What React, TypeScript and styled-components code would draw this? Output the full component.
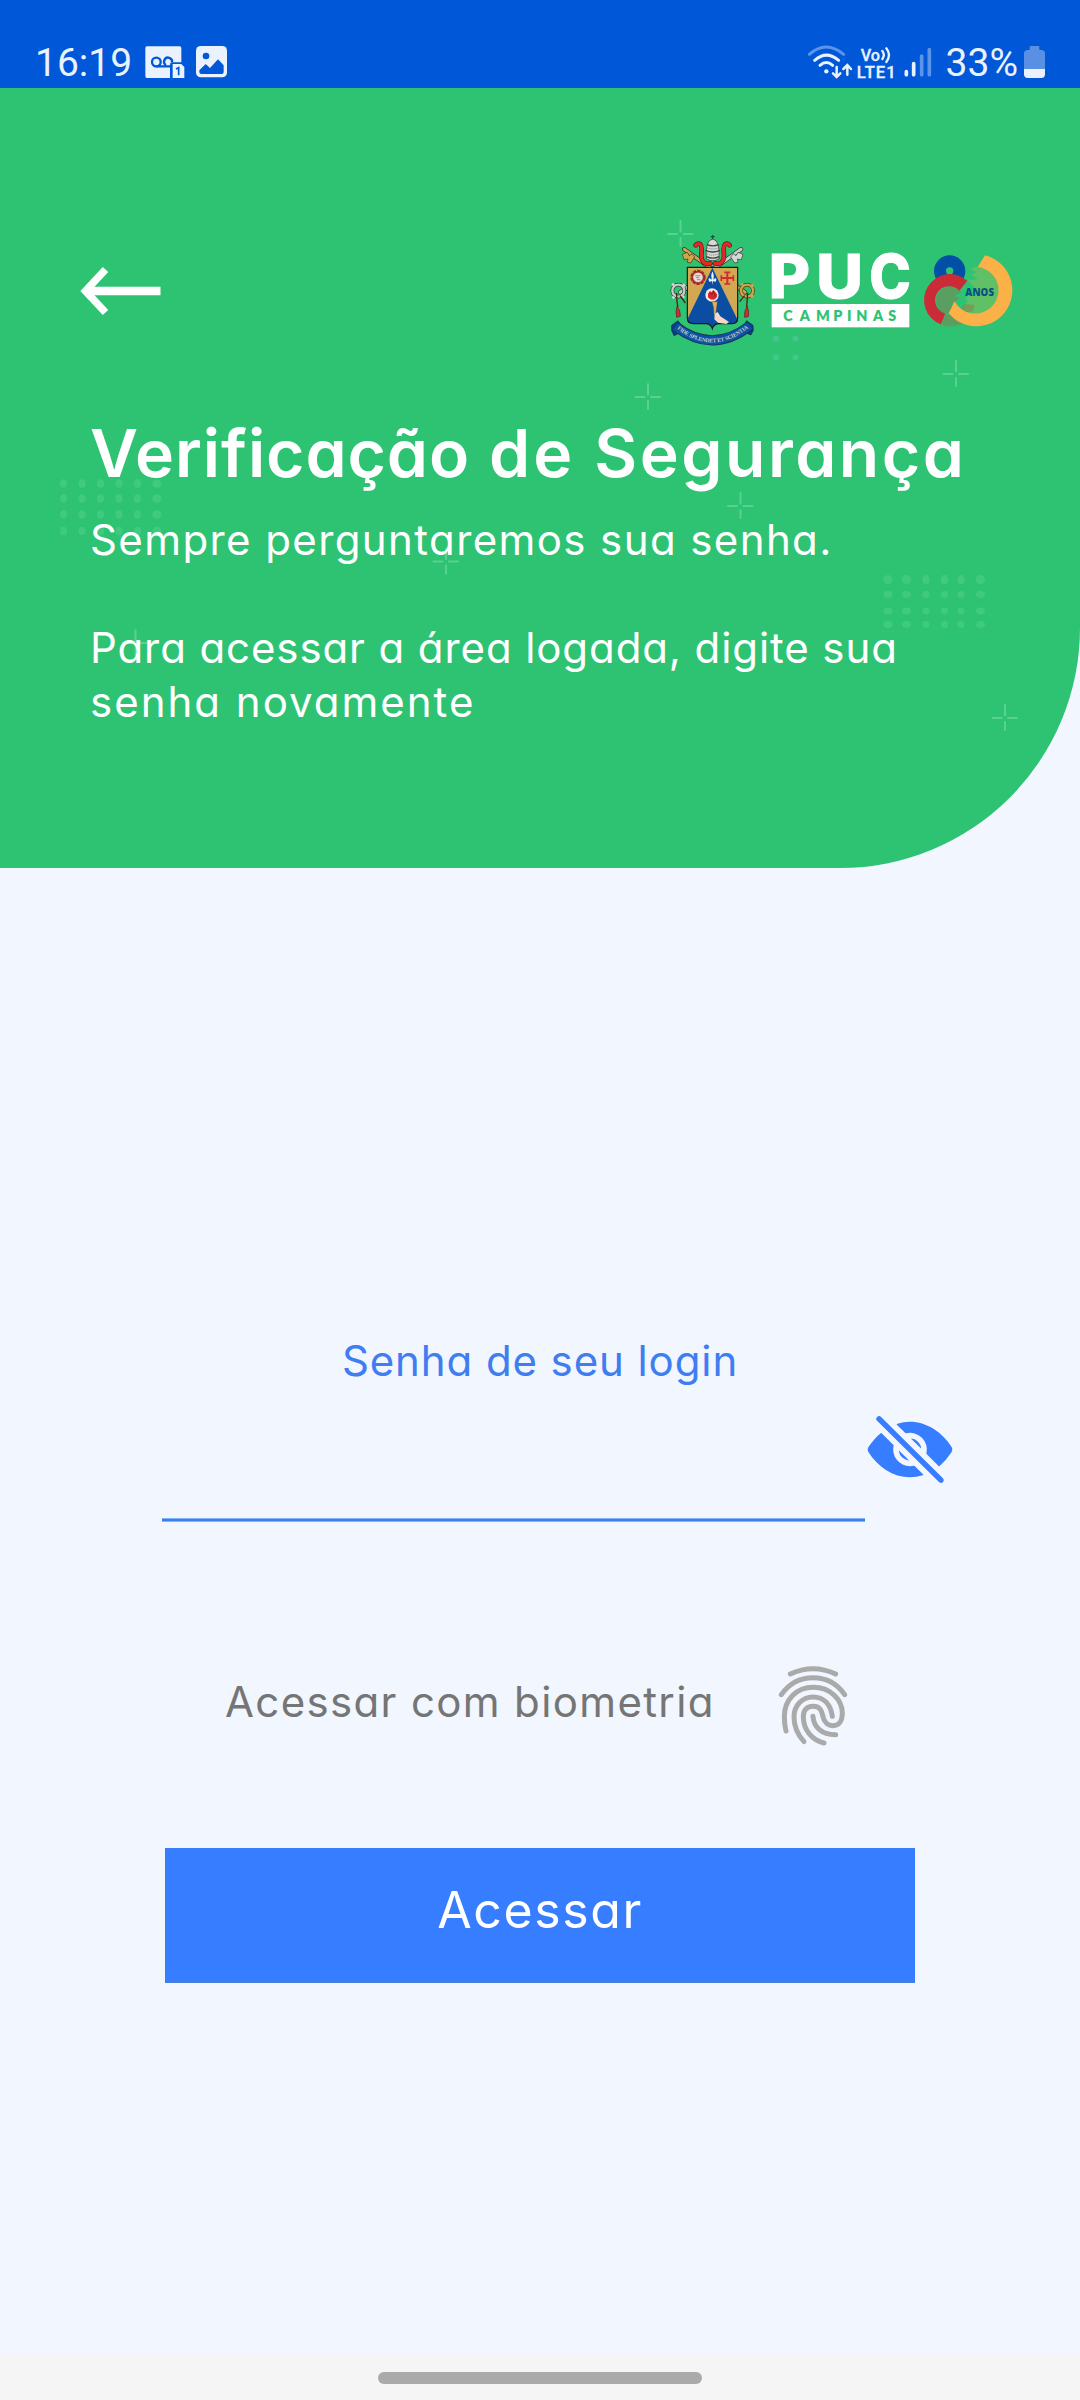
import React from "react";
import styled, { createGlobalStyle } from "styled-components";
import { IoEyeOff } from "react-icons/io5";

const GREEN = "#2ec373";
const BLUE = "#377dff";
const ICE = "#e9f2fe";

const GlobalStyle = createGlobalStyle`
  *, *::before, *::after { box-sizing: border-box; }
  body { margin: 0; background: #f1f6ff; }
  svg { display: block; flex: none; overflow: visible; }
`;

const Screen = styled.div`
  width: 1080px;
  height: 2400px;
  display: flex;
  flex-direction: column;
  background: #f1f6ff;
  font-family: Inter, "Open Sans", sans-serif;
  font-feature-settings: "cv11" 1;
  overflow: hidden;
`;

const StatusBar = styled.div`
  height: 88px;
  flex: none;
  display: flex;
  justify-content: space-between;
  align-items: flex-start;
  padding: 40px 35px 0 35px;
  background: #0057d8;
  color: ${ICE};
  font-family: Roboto, sans-serif;
`;

const StatusGroup = styled.div<{ $gap: number }>`
  display: flex;
  align-items: center;
  height: 44px;
  gap: ${(p) => p.$gap}px;
`;

const StatusText = styled.span<{ $before?: number }>`
  margin-left: ${(p) => p.$before ?? 0}px;
  padding-top: 1px;
  font-size: 39px;
  line-height: 44px;
`;

const Header = styled.header`
  position: relative;
  height: 780px;
  flex: none;
  display: flex;
  flex-direction: column;
  padding: 145px 0 0;
  background: ${GREEN};
  border-bottom-right-radius: 240px;
  color: #fff;
`;

const Decoration = styled.svg`
  position: absolute;
  inset: 0;
`;

const TopRow = styled.div`
  position: relative;
  display: flex;
  align-items: center;
  justify-content: space-between;
  height: 116px;
  padding: 0 66px 0 80px;
`;

const BackButton = styled.button`
  padding: 0;
  border: 0;
  background: none;
`;

const Logo = styled.div`
  display: flex;
  align-items: center;
`;

const HeaderText = styled.div`
  position: relative;
  padding: 59px 0 0 90px;
`;

const Title = styled.h1`
  display: flex;
  gap: 19px;
  margin: 0 0 15px;
  font-size: 66px;
  line-height: 90px;
  font-weight: 600;
  white-space: nowrap;
`;

const TitleWord = styled.span<{ $spacing: number }>`
  letter-spacing: ${(p) => p.$spacing}px;
`;

const Paragraph = styled.p`
  margin: 0 0 54px;
  font-size: 42px;
  line-height: 54px;
`;

const Line = styled.span<{ $spacing: number }>`
  display: block;
  letter-spacing: ${(p) => p.$spacing}px;
`;

const Form = styled.main`
  flex: 1;
  display: flex;
  flex-direction: column;
  padding: 466px 165px 0 162px;
`;

const Label = styled.label`
  align-self: center;
  padding-left: 3px;
  font-size: 42px;
  line-height: 54px;
  letter-spacing: 0.9px;
  color: #3f7df0;
`;

const PasswordRow = styled.div`
  display: flex;
  height: 134px;
  margin-right: -60px;
`;

const PasswordField = styled.div`
  width: 703px;
  height: 134px;
  background: linear-gradient(#82b2fb 0 1px, #407ee9 1px 3px, #82b2fb 3px 4px) bottom / 100% 4px no-repeat;
`;

const EyeToggle = styled.button`
  align-self: flex-start;
  margin: 17px 0 0;
  padding: 0;
  border: 0;
  background: none;
  color: ${BLUE};
  svg { width: 90px; height: 89px; }
`;

const BiometricRow = styled.div`
  display: flex;
  align-items: center;
  justify-content: space-between;
  height: 80px;
  margin-top: 143px;
  padding: 0 67px 0 63px;
  color: #757575;
  font-size: 42px;
  line-height: 54px;
`;

const BiometricLabel = styled.span`
  letter-spacing: 1.35px;
  padding-bottom: 6px;
`;

const SubmitButton = styled.button`
  width: 750px;
  height: 135px;
  margin: 103px 0 0 3px;
  padding: 0 0 10px;
  border: 0;
  border-bottom: 1px solid #4a7fd8;
  background: ${BLUE};
  color: #fff;
  font-family: inherit;
  font-feature-settings: inherit;
  font-size: 50px;
  letter-spacing: 1.6px;
`;

const NavigationBar = styled.div`
  height: 46px;
  flex: none;
  display: flex;
  justify-content: center;
  padding-top: 18px;
  background: #f5f5f5;
`;

const HomePill = styled.div`
  width: 324px;
  height: 12px;
  border-radius: 6px;
  background: #aaa;
`;

const crosses = [
  { x: 680.5, y: 146 },
  { x: 648, y: 309 },
  { x: 956, y: 286 },
  { x: 740.5, y: 418 },
  { x: 1005, y: 630 },
  { x: 446, y: 473.5 },
  { x: 135.5, y: 555 },
];

const dotGrids = [
  { xs: [63.5, 82, 100.5, 119, 137.5, 157], ys: [395.5, 410.5, 426.5, 443] },
  { xs: [888, 906.5, 926, 944.5, 961, 980.5], ys: [491.5, 506.5, 523, 536.5] },
];

function HeaderDecoration() {
  return (
    <Decoration width="1080" height="779" viewBox="0 0 1080 779">
      {crosses.map((c) => (
        <path
          key={`${c.x}-${c.y}`}
          d={`M${c.x - 12.5} ${c.y}h9M${c.x + 3} ${c.y}h9M${c.x} ${c.y - 13}v10.5M${c.x} ${c.y + 4}v8`}
          stroke="#5ad092"
          strokeWidth="2"
          strokeLinecap="round"
          fill="none"
        />
      ))}
      {dotGrids.map((grid, g) =>
        grid.ys.map((y) =>
          grid.xs.map((x, i) => (
            <ellipse
              key={`${g}-${x}-${y}`}
              cx={x}
              cy={y}
              rx={i === 5 || (g === 1 && i < 2) ? 4.5 : 3.5}
              ry={g === 0 ? 4.3 : y < 500 ? 4.6 : 3.4}
              fill="#40ca80"
            />
          ))
        )
      )}
      {[776, 795.5].map((x) =>
        [250.5, 269.5].map((y) => <circle key={`${x}-${y}`} cx={x} cy={y} r="3" fill="#42c88c" />)
      )}
    </Decoration>
  );
}

function BackArrow() {
  return (
    <svg width="82" height="52" viewBox="0 0 82 52" fill="none" stroke="#fff">
      <path d="M7 26H80.5" strokeWidth="8.5" />
      <path d="M25.5 4.5L5.5 26L25.5 47.5" strokeWidth="7.5" />
    </svg>
  );
}

function Crest() {
  return (
    <svg width="90" height="116" viewBox="45 70 270 348">
      <defs>
        <clipPath id="shield">
          <path d="M112 172H263V325Q263 342 246 342H205Q191 344 187 357Q183 344 170 342H130Q112 342 112 325Z" />
        </clipPath>
        <path id="motto" d="M75 352Q187 446 301 350" />
      </defs>
      {/* crossed keys */}
      <g strokeLinecap="round" fill="none">
        <path d="M103 119L285 248" stroke="#2b2a22" strokeWidth="13" />
        <path d="M103 119L285 248" stroke="#d0a54b" strokeWidth="9" />
        <path d="M273 119L91 248" stroke="#333" strokeWidth="13" />
        <path d="M273 119L91 248" stroke="#c7ccca" strokeWidth="9" />
      </g>
      <path d="M97 134L112 128L118 138L126 132L134 142L122 160L112 158L114 148L102 150Z" fill="#d0a54b" stroke="#3c3418" strokeWidth="2" />
      <path d="M279 134L264 128L258 138L250 132L242 142L254 160L264 158L262 148L274 150Z" fill="#d4d8d6" stroke="#333" strokeWidth="2" />
      {/* tiara ribbons */}
      <g fill="none" strokeLinecap="round">
        <path d="M137 107Q142 99 151 104C162 115 148 138 157 152Q165 166 181 161M239 107Q234 99 225 104C214 115 228 138 219 152Q211 166 195 161" stroke="#5c1714" strokeWidth="14" />
        <path d="M137 107Q142 99 151 104C162 115 148 138 157 152Q165 166 181 161M239 107Q234 99 225 104C214 115 228 138 219 152Q211 166 195 161" stroke="#e3282c" strokeWidth="10" />
      </g>
      {/* tiara */}
      <path d="M169 148Q165 91 188 88Q211 91 207 148Q188 158 169 148Z" fill="#d5d9d6" stroke="#222" strokeWidth="2" />
      <path d="M169 141Q188 150 208 141M167 122Q188 132 209 122M171 105Q188 112 206 105" stroke="#3d4240" strokeWidth="4" fill="none" />
      <path d="M171 132Q188 141 206 132M170 114Q188 122 207 114" stroke="#777e7b" strokeWidth="3" strokeDasharray="3 3" fill="none" />
      <path d="M188 76V89M182 81H194" stroke="#174f38" strokeWidth="3.5" />
      {/* key bows and tassels */}
      <g fill="none">
        <circle cx="85" cy="243" r="18" stroke="#35352f" strokeWidth="11" />
        <circle cx="85" cy="243" r="18" stroke="#c7ccca" strokeWidth="7" />
        <path d="M67 227L72 222M98 224L105 230M67 261L73 266M98 263L103 260" stroke="#d8dbd9" strokeWidth="7" />
        <circle cx="291" cy="243" r="18" stroke="#4a3b18" strokeWidth="11" />
        <circle cx="291" cy="243" r="18" stroke="#d0a54b" strokeWidth="7" />
        <path d="M304 224L310 230M274 226L279 221M303 263L310 257M276 263L280 267" stroke="#d0a54b" strokeWidth="7" />
        <path d="M80 250Q80 280 84 292M90 258L106 280M293 250Q291 280 290 292M284 258L269 276" stroke="#4a2419" strokeWidth="4" />
      </g>
      <path d="M81 290Q92 302 91 320L80 323Q76 306 81 290ZM292 290Q298 306 295 321L284 323Q281 305 292 290Z" fill="#dc2830" stroke="#5b1a19" strokeWidth="2" />
      {/* shield */}
      <g clipPath="url(#shield)">
        <rect x="110" y="170" width="156" height="190" fill="#d3a852" />
        <path d="M187 174L264 333V360H110V333Z" fill="#0b4da2" />
      </g>
      <path d="M112 173H263V325Q263 342 246 342H205Q191 344 187 357Q183 344 170 342H130Q112 342 112 325Z" fill="none" stroke="#141b18" strokeWidth="3.5" />
      <circle cx="144" cy="203" r="20" fill="#cf2f2e" stroke="#a52723" strokeWidth="6" strokeDasharray="10 3" />
      <circle cx="144" cy="203" r="15.5" fill="#e6dcd2" stroke="#712" strokeWidth="1.5" />
      <path d="M136 198H151M138 204H148M141 210H151" stroke="#756963" strokeWidth="2" />
      <path d="M232 188V223M215 205H249" stroke="#d7282d" strokeWidth="6" />
      <path d="M223 188H241M223 223H241M214 197V214M250 197V214" stroke="#d7282d" strokeWidth="5" />
      <path d="M187 185Q181 197 185 210L178 205Q173 210 179 217L186 214L187 226L189 214L196 217Q202 210 196 205L190 210Q194 197 187 185Z" fill="#eef2f6" />
      <circle cx="186" cy="256" r="20" fill="#f4e7e0" />
      <path d="M174 252L180 244L185 248L190 241L196 247L202 255L199 265L191 270L181 269L174 263Z" fill="#d8262d" />
      <path d="M178 250L186 254L190 244L194 256L199 262" stroke="#8c1420" strokeWidth="2" fill="none" />
      <path d="M186 276H202L197 314H192L191 294Z" fill="#dcb05c" stroke="#725c2c" strokeWidth="1" />
      <path d="M194 312L203 307L211 320L237 337L229 343L204 339L193 329Z" fill="#f7d8c8" />
      {/* motto ribbon */}
      <path d="M65 347L84 333L95 348L90 369L72 378L65 363ZM309 347L290 333L280 349L286 369L303 376L310 362Z" fill="#0b3f89" stroke="#102a44" strokeWidth="2" />
      <path d="M76 350Q187 435 300 348" fill="none" stroke="#132d46" strokeWidth="30" />
      <path d="M76 350Q187 435 300 348" fill="none" stroke="#0d51a5" strokeWidth="26" />
      <text fontFamily="Liberation Serif, serif" fontWeight="700" fontSize="17" fill="#c9cfc2">
        <textPath href="#motto" startOffset="8" textLength="235" lengthAdjust="spacing">
          FIDE SPLENDET ET SCIENTIA
        </textPath>
      </text>
    </svg>
  );
}

const wordmarkLetters = [
  { letter: "P", x: 56, width: 124 },
  { letter: "U", x: 199, width: 140 },
  { letter: "C", x: 358, width: 125 },
];

function Wordmark() {
  return (
    <svg width="154" height="116" viewBox="15 70 462 348">
      <g fill="#fff" fontFamily="Inter, sans-serif" fontWeight="800" fontSize="182" stroke="#fff" strokeWidth="3">
        {wordmarkLetters.map((l) => (
          <text key={l.letter} x={l.x} y="264" textLength={l.width} lengthAdjust="spacingAndGlyphs">
            {l.letter}
          </text>
        ))}
      </g>
      <rect x="65" y="283" width="413" height="70" fill="#fff" />
      <text
        x="100 149 198 250 291 319 369 415"
        y="333"
        fontFamily="Lato, sans-serif"
        fontWeight="800"
        fontSize="43"
        fill={GREEN}
      >
        CAMPINAS
      </text>
    </svg>
  );
}

function Anniversary() {
  return (
    <svg width="105" height="116" viewBox="477 70 315 348">
      <defs>
        <pattern id="limeDots" width="6" height="6" patternUnits="userSpaceOnUse" patternTransform="rotate(45)">
          <circle cx="3" cy="3" r="2.3" fill="#a8ba52" />
        </pattern>
        <pattern id="redDots" width="6" height="6" patternUnits="userSpaceOnUse" patternTransform="rotate(45)">
          <circle cx="3" cy="3" r="2.2" fill="#9c6843" />
        </pattern>
      </defs>
      <path
        d="M660 177L685 171A72 72 0 1 1 640 298L652 274L648 262L672 256V230L652 212L684 209L664 195L679 188Z"
        fill="url(#limeDots)"
      />
      <path d="M589 312L605 306L638 342Q600 358 568 343ZM628 290L648 283L674 286L669 306L648 308Z" fill="url(#redDots)" />
      <path
        d="M599 137A47 47 0 1 0 599 231A47 47 0 1 0 599 137ZM599 173A11 11 0 1 1 599 195A11 11 0 1 1 599 173Z"
        fill="#0250a5"
        fillRule="evenodd"
      />
      <circle cx="600" cy="272" r="43" fill={GREEN} />
      <path d="M558 272A42 42 0 0 1 634 248L613 259L630 267L606 281L612 302L590 313A42 42 0 0 1 558 272Z" fill="url(#redDots)" />
      <path d="M652 213A78 78 0 1 0 572 344L586 312A42 42 0 1 1 628 243Z" fill="#cb2b36" />
      <path d="M705 137A108 108 0 1 1 596 311L614 275A70 70 0 1 0 683 172Z" fill="#fbb048" />
      <text x="646" y="258" fontFamily="Open Sans, sans-serif" fontWeight="800" fontSize="29" fill="#0b4f84" textLength="86">
        ANOS
      </text>
    </svg>
  );
}

function VoicemailIcon() {
  return (
    <svg width="40" height="32" viewBox="434 78 120 96">
      <path d="M440 79H538Q543 79 543 84V127H515Q509 127 509 134V174H440Q435 174 435 168V85Q435 79 440 79Z" fill={ICE} />
      <g fill="none" stroke="#0057d8" strokeWidth="7">
        <circle cx="468" cy="126" r="13" />
        <path d="M515 127A12 12 0 1 0 497 135M468 139H509" />
      </g>
      <path d="M517 132H543L552 141V174H517Z" fill={ICE} />
      <path d="M527 147L535 143V166" stroke="#0057d8" strokeWidth="5" fill="none" />
    </svg>
  );
}

function PictureIcon() {
  return (
    <svg width="31" height="32" viewBox="594 80 93 96">
      <rect x="588" y="80" width="93" height="94" rx="14" fill={ICE} />
      <circle cx="618" cy="110" r="10" fill="#0057d8" />
      <path d="M598 153L617 134L630 146L654 120L671 138V158Q671 164 665 164H604Q598 164 598 158Z" fill="#0057d8" />
    </svg>
  );
}

function NetworkIcons() {
  return (
    <svg width="124" height="36" viewBox="83 70 372 108">
      <g fill="none" strokeLinecap="round" stroke={ICE} strokeWidth="9">
        <path d="M87 101Q137 57 190 101" stroke="#5b94e8" />
        <path d="M103 119Q138 88 175 119" />
        <path d="M119 134Q138 117 157 134" />
        <path d="M169 139V166M158 158L169 169L180 158M201 162V135M189 145L201 133L212 145" strokeWidth="7.5" />
      </g>
      <circle cx="138" cy="152" r="6.5" fill={ICE} />
      <g fill={ICE} stroke={ICE} strokeWidth="1" fontFamily="Roboto, sans-serif" fontWeight="500">
        <text x="241" y="120" fontSize="50" textLength="58" lengthAdjust="spacingAndGlyphs">Vo</text>
        <text x="229" y="171" fontSize="50" textLength="117">LTE1</text>
      </g>
      <path d="M306 91Q315 102 306 115M318 83Q334 103 318 124" stroke={ICE} strokeWidth="7" fill="none" strokeLinecap="round" />
      <g strokeWidth="11" strokeLinecap="round">
        <path d="M378 153V162M400 129V162" stroke={ICE} />
        <path d="M424 106V162M447 87V162" stroke="#5b94e8" />
      </g>
    </svg>
  );
}

function BatteryIcon() {
  return (
    <svg width="21" height="32" viewBox="732 78 63 96">
      <path d="M752 78H775Q778 78 778 82V90H784Q795 90 795 101V148H732V101Q732 90 743 90H749V82Q749 78 752 78Z" fill="#5990e3" />
      <path d="M732 147H795V163Q795 174 784 174H743Q732 174 732 163Z" fill={ICE} />
    </svg>
  );
}

function Fingerprint() {
  return (
    <svg width="70" height="80" viewBox="114 77 210 240" fill="none" stroke="#aaa" strokeWidth="15" strokeLinecap="round">
      <path d="M151 104Q184 88 219 88Q254 88 287 104" />
      <path d="M124 166C150 128 184 115 219 115C256 115 290 130 314 166" />
      <path d="M138 275Q133 255 133 232C133 180 170 144 220 144C270 144 307 180 307 222C307 245 296 259 280 259C262 259 252 246 249 232C246 218 243 201 219 201C200 201 190 214 190 232C190 270 215 303 252 311" />
      <path d="M192 307C172 285 162 258 162 232C162 200 186 173 219 173C252 173 272 196 277 231" />
      <path d="M219 231C221 262 243 286 287 286" />
    </svg>
  );
}

export default function App() {
  return (
    <Screen>
      <GlobalStyle />
      <StatusBar>
        <StatusGroup $gap={13}>
          <StatusText>16:19</StatusText>
          <VoicemailIcon />
          <PictureIcon />
        </StatusGroup>
        <StatusGroup $gap={6}>
          <NetworkIcons />
          <StatusText $before={8}>33%</StatusText>
          <BatteryIcon />
        </StatusGroup>
      </StatusBar>
      <Header>
        <HeaderDecoration />
        <TopRow>
          <BackButton aria-label="Voltar">
            <BackArrow />
          </BackButton>
          <Logo>
            <Crest />
            <Wordmark />
            <Anniversary />
          </Logo>
        </TopRow>
        <HeaderText>
          <Title>
            <TitleWord $spacing={0.9}>Verificação</TitleWord>
            <TitleWord $spacing={3}>de</TitleWord>
            <TitleWord $spacing={2.5}>Segurança</TitleWord>
          </Title>
          <Paragraph>
            <Line $spacing={1.4}>Sempre perguntaremos sua senha.</Line>
          </Paragraph>
          <Paragraph>
            <Line $spacing={0.9}>Para acessar a área logada, digite sua</Line>
            <Line $spacing={2}>senha novamente</Line>
          </Paragraph>
        </HeaderText>
      </Header>
      <Form>
        <Label>Senha de seu login</Label>
        <PasswordRow>
          <PasswordField />
          <EyeToggle aria-label="Mostrar senha">
            <IoEyeOff preserveAspectRatio="none" />
          </EyeToggle>
        </PasswordRow>
        <BiometricRow>
          <BiometricLabel>Acessar com biometria</BiometricLabel>
          <Fingerprint />
        </BiometricRow>
        <SubmitButton>Acessar</SubmitButton>
      </Form>
      <NavigationBar>
        <HomePill />
      </NavigationBar>
    </Screen>
  );
}
